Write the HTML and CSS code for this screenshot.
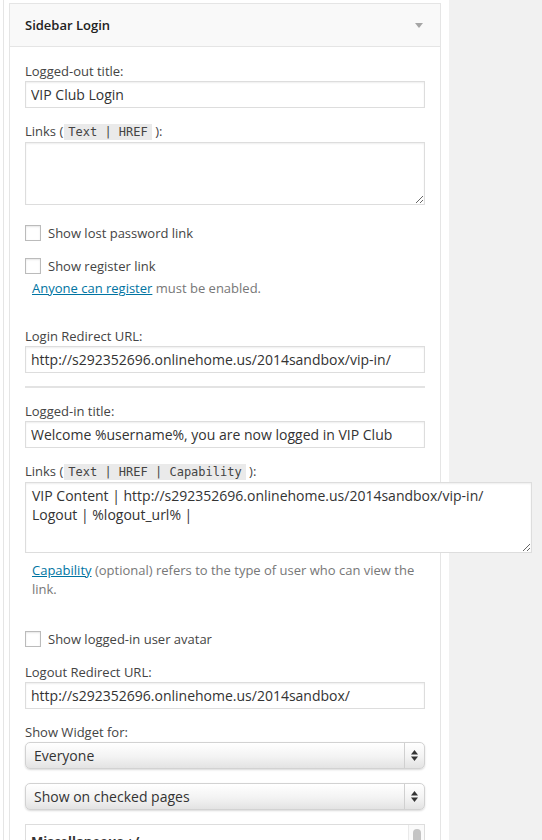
FILE: index.html
```html
<!DOCTYPE html>
<html lang="en">
<head>
<meta charset="UTF-8">
<meta name="viewport" content="width=device-width, initial-scale=1.0">
<title>Sidebar Login</title>
<link rel="stylesheet" href="styles.css">
</head>
<body>
<div class="wrap">
    <div class="sidebar">
        <div class="widget">
            <div class="widget-top">
                <h3>Sidebar Login</h3>
                <span class="toggle"></span>
            </div>
            <div class="widget-inside">
                <div class="field first">
                    <label>Logged-out title:</label>
                    <input class="widefat" type="text" value="VIP Club Login">
                </div>
                <div class="field">
                    <label class="with-code">Links (<code>Text | HREF</code> ):</label>
                    <textarea class="widefat links-out"></textarea>
                </div>
                <div class="check check-first">
                    <input type="checkbox">
                    <span>Show lost password link</span>
                </div>
                <div class="check check-second">
                    <input type="checkbox">
                    <span>Show register link</span>
                </div>
                <p class="description note-register"><a href="#">Anyone can register</a> must be enabled.</p>
                <div class="field after-note">
                    <label>Login Redirect URL:</label>
                    <input class="widefat" type="text" value="http://s292352696.onlinehome.us/2014sandbox/vip-in/">
                </div>
                <hr class="divider">
                <div class="field after-hr">
                    <label>Logged-in title:</label>
                    <input class="widefat" type="text" value="Welcome %username%, you are now logged in VIP Club">
                </div>
                <div class="field">
                    <label class="with-code">Links (<code>Text | HREF | Capability</code> ):</label>
                    <textarea class="widefat links-in">VIP Content | http://s292352696.onlinehome.us/2014sandbox/vip-in/
Logout | %logout_url% |</textarea>
                </div>
                <p class="description note-capability"><a href="#">Capability</a> (optional) refers to the type of user who can view the link.</p>
                <div class="check check-avatar">
                    <input type="checkbox">
                    <span>Show logged-in user avatar</span>
                </div>
                <div class="field after-avatar">
                    <label>Logout Redirect URL:</label>
                    <input class="widefat" type="text" value="http://s292352696.onlinehome.us/2014sandbox/">
                </div>
                <div class="field">
                    <label>Show Widget for:</label>
                    <div class="select">
                        <span class="select-value">Everyone</span>
                        <span class="select-arrows">
                            <svg width="7" height="11" viewBox="0 0 7 11"><polygon points="0,4.5 3.5,0 7,4.5" fill="#333"/><polygon points="0,6.5 7,6.5 3.5,11" fill="#333"/></svg>
                        </span>
                    </div>
                </div>
                <div class="select select-second">
                    <span class="select-value">Show on checked pages</span>
                    <span class="select-arrows">
                        <svg width="7" height="11" viewBox="0 0 7 11"><polygon points="0,4.5 3.5,0 7,4.5" fill="#333"/><polygon points="0,6.5 7,6.5 3.5,11" fill="#333"/></svg>
                    </span>
                </div>
                <div class="pages">
                    <div class="pages-list">
                        <strong>Miscellaneous +/-</strong>
                    </div>
                    <div class="pages-scroll"><span class="thumb"></span></div>
                </div>
            </div>
        </div>
    </div>
</div>
</body>
</html>
```

FILE: styles.css
```css
body {
    margin: 0;
    background: #f1f1f1;
    font-family: "Open Sans", "Liberation Sans", sans-serif;
    font-size: 13px;
    color: #444;
}
.wrap {
    width: 449px;
    background: #fff;
    min-height: 100vh;
}
.sidebar {
    margin-left: 3px;
    border-left: 1px solid #e5e5e5;
    padding: 3px 8px 0 5px;
}
.widget {
    border: 1px solid #e5e5e5;
    background: #fff;
}
.widget-top {
    height: 42px;
    background: #f9f9f9;
    border-bottom: 1px solid #e5e5e5;
    display: flex;
    align-items: center;
    justify-content: space-between;
    padding: 0 17px 0 15px;
}
.widget-top h3 {
    margin: 0;
    font-size: 13px;
    font-weight: 600;
    color: #222;
}
.toggle {
    width: 0;
    height: 0;
    border-left: 4px solid transparent;
    border-right: 4px solid transparent;
    border-top: 5px solid #a6a6a6;
}
.widget-inside {
    padding: 15px 15px 20px;
}
.field {
    margin-top: 14px;
}
.field.first {
    margin-top: 0;
}
.field label {
    display: block;
    line-height: 18px;
    margin-bottom: 1px;
}
code {
    font-family: "DejaVu Sans Mono", monospace;
    font-size: 12px;
    background: #eaeaea;
    padding: 1px 4px;
    margin-left: 1px;
}
.widefat {
    display: block;
    box-sizing: border-box;
    width: 400px;
    height: 27px;
    margin: 0;
    border: 1px solid #ddd;
    border-radius: 0;
    padding: 0 5px;
    background: #fff;
    box-shadow: inset 0 1px 2px rgba(0, 0, 0, 0.07);
    font-family: "Open Sans", "Liberation Sans", sans-serif;
    font-size: 14px;
    color: #333;
    outline: none;
}
textarea.widefat {
    padding: 3px 6px;
    line-height: 19px;
    resize: both;
}
.links-out {
    height: 63px;
}
.links-in {
    width: 507px;
    height: 71px;
}
.check {
    display: flex;
    align-items: center;
    height: 16px;
    line-height: 16px;
}
.check input {
    appearance: none;
    width: 16px;
    height: 16px;
    margin: 0 7px 0 0;
    border: 1px solid #bbb;
    background: #fff;
    box-shadow: inset 0 1px 2px rgba(0, 0, 0, 0.1);
}
.check-first {
    margin-top: 20px;
}
.check-second {
    margin-top: 17px;
}
.check-avatar {
    margin-top: 31px;
}
.description {
    color: #777;
    line-height: 19.5px;
    margin: 0;
    padding-left: 7px;
    padding-right: 7px;
}
.description a {
    color: #0074a2;
}
.note-register {
    margin-top: 5px;
}
.note-capability {
    margin-top: 8px;
}
.field.after-note {
    margin-top: 28px;
}
.divider {
    margin: 13px 0 0;
    border: 0;
    height: 2px;
    background: #e3e3e3;
}
.field.after-hr {
    margin-top: 14px;
}
.field.after-avatar {
    margin-top: 16px;
}
.select {
    display: flex;
    box-sizing: border-box;
    width: 400px;
    height: 27px;
    border: 1px solid #d2d2d2;
    border-radius: 5px;
    background: linear-gradient(#ffffff, #f3f3f3 55%, #e3e3e3);
    box-shadow: 0 1px 2px rgba(0, 0, 0, 0.15);
}
.select-second {
    margin-top: 14px;
}
.select-value {
    flex: 1;
    padding-left: 8px;
    line-height: 25px;
    font-size: 14px;
    color: #333;
}
.select-arrows {
    width: 19px;
    border-left: 1px solid #d0d0d0;
    display: flex;
    align-items: center;
    justify-content: center;
}
.pages {
    display: flex;
    box-sizing: border-box;
    width: 400px;
    height: 90px;
    margin-top: 14px;
    border: 1px solid #ddd;
    background: #fff;
}
.pages-list {
    flex: 1;
    padding: 7px 5px;
    color: #333;
}
.pages-scroll {
    width: 15px;
    border-left: 1px solid #eaeaea;
    background: #fafafa;
}
.thumb {
    display: block;
    width: 8px;
    height: 40px;
    margin: 4px 0 0 4px;
    border-radius: 4px;
    background: #c4c4c4;
}
```
